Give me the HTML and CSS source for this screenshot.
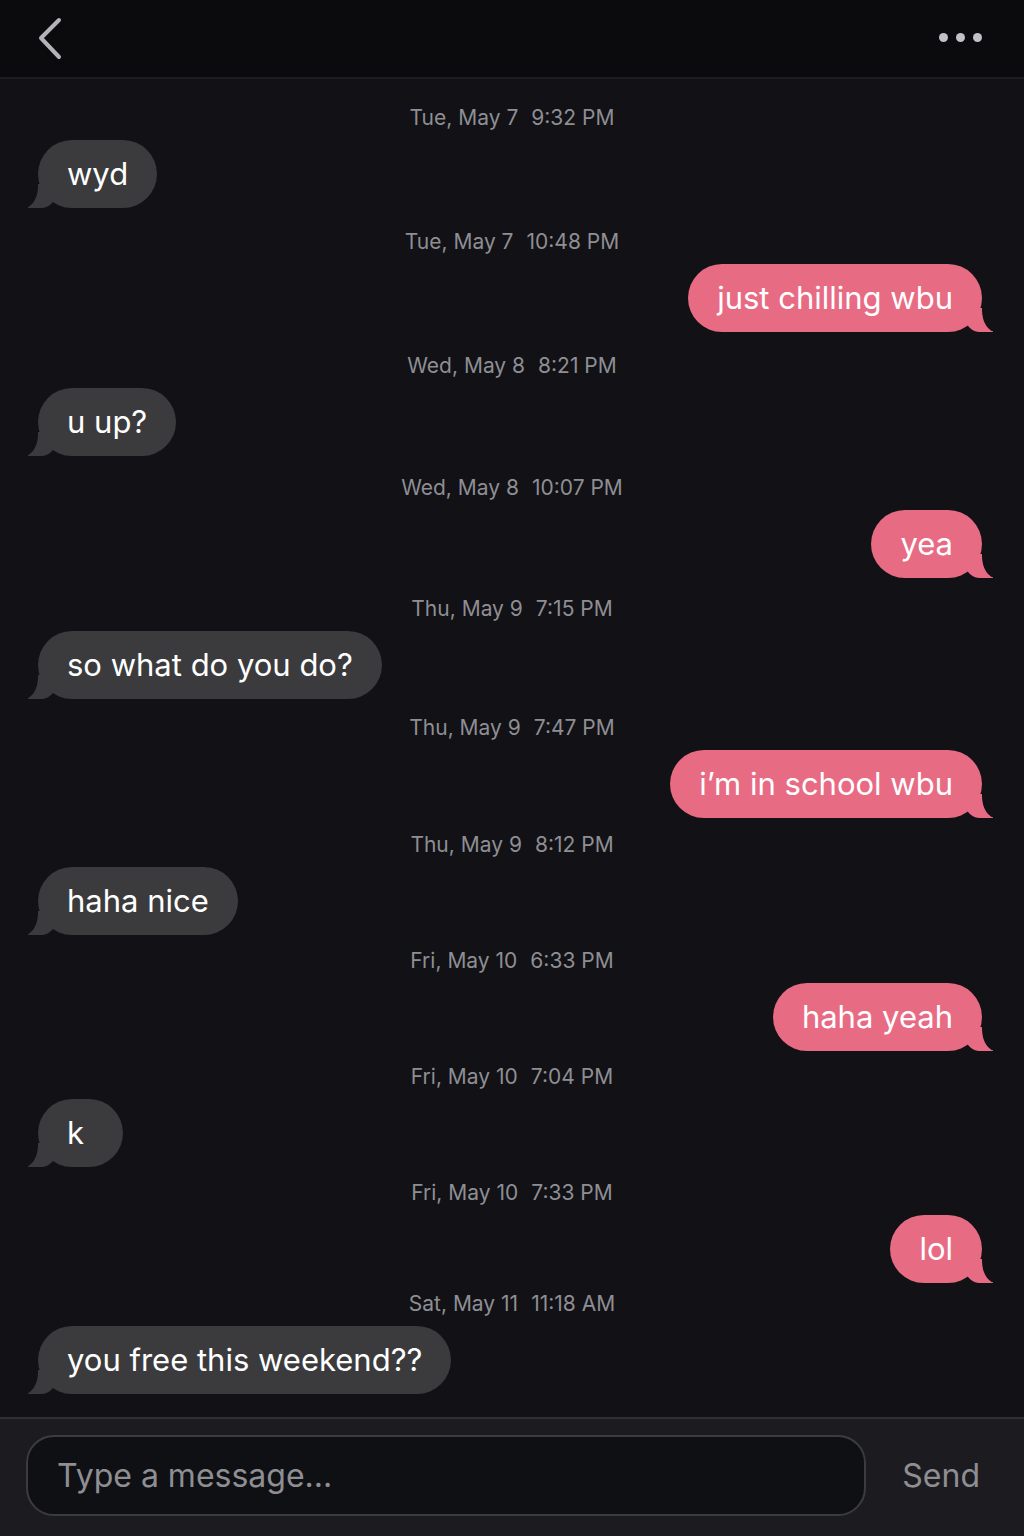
FILE: index.html
```html
<!DOCTYPE html>
<html lang="en">
<head>
	<meta charset="UTF-8">
	<title>Chat</title>
	<link rel="stylesheet" href="styles.css">
</head>
<body>
	<div class="top_bar">
		<div class="back">
			<svg width="30" height="44" viewBox="0 0 30 44"><polyline points="23,3 5,21 23,40" fill="none" stroke="#b4b4b8" stroke-width="4" stroke-linecap="round" stroke-linejoin="round"/></svg>
		</div>
		<div class="more"><span></span><span></span><span></span></div>
	</div>

	<div class="chat_list">
		<div class="group">
			<div class="stamp">Tue, May 7<span class="gap"></span>9:32 PM</div>
			<div class="row"><div class="bubble recv">wyd</div></div>
		</div>
		<div class="group">
			<div class="stamp">Tue, May 7<span class="gap"></span>10:48 PM</div>
			<div class="row sent_row"><div class="bubble sent">just chilling wbu</div></div>
		</div>
		<div class="group">
			<div class="stamp">Wed, May 8<span class="gap"></span>8:21 PM</div>
			<div class="row"><div class="bubble recv">u up?</div></div>
		</div>
		<div class="group">
			<div class="stamp">Wed, May 8<span class="gap"></span>10:07 PM</div>
			<div class="row sent_row"><div class="bubble sent">yea</div></div>
		</div>
		<div class="group">
			<div class="stamp">Thu, May 9<span class="gap"></span>7:15 PM</div>
			<div class="row"><div class="bubble recv">so what do you do?</div></div>
		</div>
		<div class="group">
			<div class="stamp">Thu, May 9<span class="gap"></span>7:47 PM</div>
			<div class="row sent_row"><div class="bubble sent">i’m in school wbu</div></div>
		</div>
		<div class="group">
			<div class="stamp">Thu, May 9<span class="gap"></span>8:12 PM</div>
			<div class="row"><div class="bubble recv">haha nice</div></div>
		</div>
		<div class="group">
			<div class="stamp">Fri, May 10<span class="gap"></span>6:33 PM</div>
			<div class="row sent_row"><div class="bubble sent">haha yeah</div></div>
		</div>
		<div class="group">
			<div class="stamp">Fri, May 10<span class="gap"></span>7:04 PM</div>
			<div class="row"><div class="bubble recv">k</div></div>
		</div>
		<div class="group">
			<div class="stamp">Fri, May 10<span class="gap"></span>7:33 PM</div>
			<div class="row sent_row"><div class="bubble sent">lol</div></div>
		</div>
		<div class="group">
			<div class="stamp">Sat, May 11<span class="gap"></span>11:18 AM</div>
			<div class="row"><div class="bubble recv">you free this weekend??</div></div>
		</div>
	</div>

	<div class="bottom_bar">
		<div class="input_box">Type a message...</div>
		<div class="send">Send</div>
	</div>
</body>
</html>
```

FILE: styles.css
```css
*{
	margin:0;
	padding:0;
	box-sizing:border-box;
}

body{
	width:1024px;
	height:1536px;
	background-color:#111116;
	font-family:Inter, "Noto Sans", sans-serif;
	display:flex;
	flex-direction:column;
	overflow:hidden;
}

.top_bar{
	height:79px;
	background-color:#0b0b0e;
	border-bottom:2px solid #1d1e22;
	display:flex;
	justify-content:space-between;
	align-items:center;
	padding:0 42px 0 36px;
}

.back{
	display:flex;
}

.more{
	display:flex;
	gap:8px;
	margin-top:-3px;
}

.more span{
	width:9px;
	height:9px;
	border-radius:50%;
	background-color:#c2c2c6;
}

/* 消息列表 */
.chat_list{
	flex:1;
	padding-top:27px;
	display:flex;
	flex-direction:column;
}

/* 时间戳之间的间距越往下越紧 */
.group{
	margin-top:14px;
}
.group:nth-child(1){ margin-top:0; }
.group:nth-child(2),
.group:nth-child(3){ margin-top:22px; }
.group:nth-child(4){ margin-top:20px; }
.group:nth-child(5){ margin-top:19px; }
.group:nth-child(6){ margin-top:17px; }
.group:nth-child(7){ margin-top:15px; }
.group:nth-child(11){ margin-top:9px; }

.stamp{
	text-align:center;
	font-size:21px;
	line-height:24px;
	color:#8e8e93;
	margin-bottom:10px;
}

.gap{
	display:inline-block;
	width:13px;
}

.row{
	display:flex;
	padding:0 38px;
}

.sent_row{
	justify-content:flex-end;
	padding-right:42px;
}

.bubble{
	position:relative;
	height:68px;
	min-width:85px;
	line-height:68px;
	border-radius:34px;
	padding:0 29px;
	font-size:31px;
	color:#fff;
}

.recv{
	background-color:#3b3b3d;
}

.sent{
	background-color:#e86b84;
}

.bubble::before,
.bubble::after{
	content:"";
	position:absolute;
	bottom:0;
	height:24px;
}

.recv::before{
	left:-10px;
	width:30px;
	background-color:#3b3b3d;
	border-bottom-right-radius:16px 22px;
}

.recv::after{
	left:-24px;
	width:24px;
	background-color:#111116;
	border-bottom-right-radius:14px 22px;
}

.sent::before{
	right:-11px;
	width:30px;
	background-color:#e86b84;
	border-bottom-left-radius:16px 22px;
}

.sent::after{
	right:-25px;
	width:25px;
	background-color:#111116;
	border-bottom-left-radius:14px 22px;
}

/* 底部输入栏 */
.bottom_bar{
	height:119px;
	background-color:#1c1c20;
	border-top:2px solid #303034;
	display:flex;
	align-items:center;
	padding:0 44px 4px 26px;
	gap:36px;
}

.input_box{
	width:841px;
	height:81px;
	border:2px solid #3c3c40;
	border-radius:28px;
	background-color:#0f1014;
	font-size:32px;
	line-height:77px;
	padding-left:29px;
	color:#8e8e93;
}

.send{
	font-size:32px;
	color:#8e8e93;
}
```
